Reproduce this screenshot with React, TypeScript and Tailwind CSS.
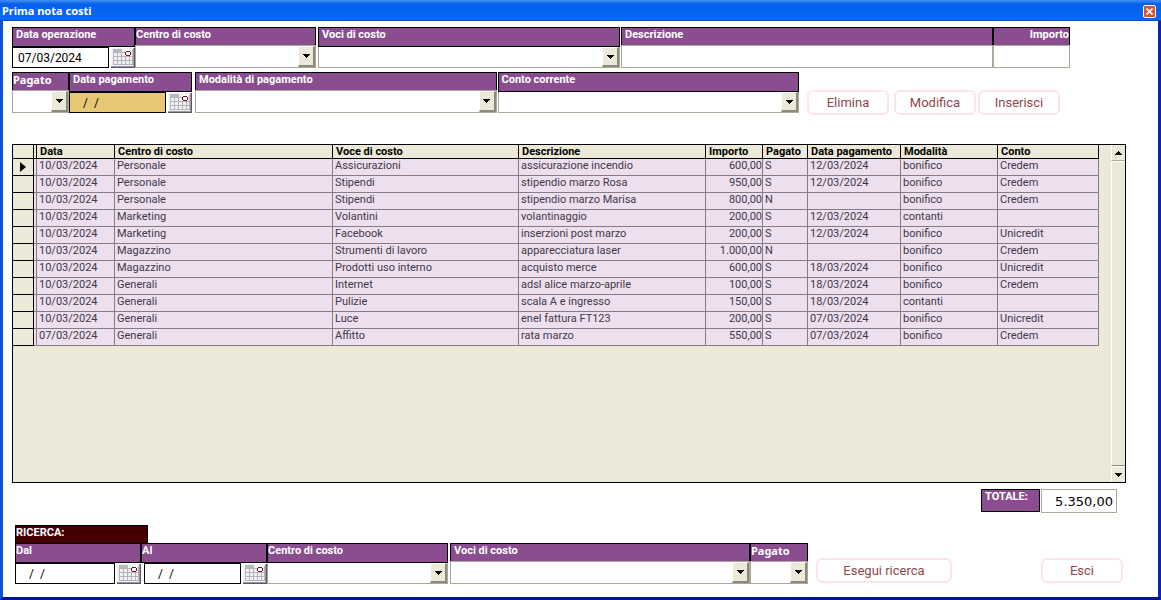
import { useId } from "react";
import type { ReactNode } from "react";

const cx = (...parts: (string | false | undefined)[]) => parts.filter(Boolean).join(" ");

type FieldProps = {
  label: string;
  id: string;
  ruled?: boolean;
  inset?: boolean;
  right?: boolean;
  wide?: boolean;
  children: ReactNode;
};

function Field({ label, id, ruled, inset, right, wide, children }: FieldProps) {
  return (
    <div className="flex h-[41px] min-w-0 flex-col">
      <label
        htmlFor={id}
        className={cx(
          "block shrink-0 overflow-hidden whitespace-nowrap border-x border-t border-black bg-[#8a4d8f] text-[11px] leading-[14px] font-bold text-white",
          ruled ? "h-5 border-b" : "h-[18px]",
          inset && "pl-[3px]",
          right && "text-right",
          wide && "font-['Noto_Sans',sans-serif]"
        )}
      >
        {label}
      </label>
      <div className="flex min-h-0 flex-1">{children}</div>
    </div>
  );
}

function SelectField(props: { label: string; options: string[]; ruled?: boolean; inset?: boolean; wide?: boolean }) {
  const id = useId();
  return (
    <Field id={id} label={props.label} ruled={props.ruled} inset={props.inset} wide={props.wide}>
      <div
        className={cx(
          "relative flex min-w-0 flex-1 border-x border-b border-[#aca899] bg-white",
          !props.ruled && "border-t"
        )}
      >
        <select id={id} defaultValue="" className="w-full min-w-0 appearance-none bg-white px-1 text-xs outline-none">
          <option value=""></option>
          {props.options.map((o) => (
            <option key={o}>{o}</option>
          ))}
        </select>
        <span className="pointer-events-none absolute inset-y-0 right-0 flex w-[17px] items-center justify-center border-t border-l border-r-2 border-b-2 border-t-white border-l-white border-r-[#8d8a7c] border-b-[#8d8a7c] bg-[#ece9d8]">
          <svg width="7" height="4" viewBox="0 0 7 4" shapeRendering="crispEdges">
            <path d="M0 0h7v1H6v1H5v1H4v1H3V3H2V2H1V1H0z" fill="#000" />
          </svg>
        </span>
      </div>
    </Field>
  );
}

function TextField({ label, inset, right }: { label: string; inset?: boolean; right?: boolean }) {
  const id = useId();
  return (
    <Field id={id} label={label} inset={inset} right={right}>
      <input
        id={id}
        type="text"
        className={cx("w-full min-w-0 border border-[#aca899] bg-white px-1 text-xs outline-none", right && "text-right")}
      />
    </Field>
  );
}

function CalendarButton({ label }: { label: string }) {
  return (
    <button type="button" aria-label={label} className="ml-px h-full w-[25px] shrink-0 bg-white">
      <svg width="25" height="21" viewBox="0 0 25 21" shapeRendering="crispEdges">
        <path d="M1 1h24v20H1z" fill="#f1f0f3" />
        <path d="M3 2h9v3H3z" fill="#b9b9c0" />
        <path
          d="M3 5.5h12M3 9.5h19M3 13.5h19M3 17.5h19M3.5 5v13M7.5 5v13M11.5 5v13M15.5 9v9M19.5 9v9M22.5 3v15"
          stroke="#b4b4bc"
          fill="none"
        />
        <path d="M1 19h23v1H1zM23 1h1v19h-1z" fill="#9a9aa3" />
        <path d="M1 20h24v1H1zM24 1h1v20h-1z" fill="#585862" />
        <path d="M15 3h6v6h-6z" fill="#fff" />
        <path d="M16 4h4v1h1v3h-1v1h-4V8h-1V5h1zM16 5v3h4V5z" fill="#7c0c1e" fillRule="evenodd" />
      </svg>
    </button>
  );
}

function DateField(props: { label: string; value: string; inset?: boolean; highlight?: boolean; spaced?: boolean }) {
  const id = useId();
  return (
    <Field id={id} label={props.label} ruled inset={props.inset}>
      <input
        id={id}
        type="text"
        defaultValue={props.value}
        className={cx(
          "min-w-0 flex-1 border border-black text-xs text-black outline-none",
          props.highlight ? "bg-[#e8c774]" : "bg-white",
          props.value.startsWith("/") ? "pl-[13px]" : "pl-[5px]",
          props.spaced && "ml-[3px]"
        )}
      />
      <CalendarButton label={`Calendario ${props.label}`} />
    </Field>
  );
}

function ActionButton({ children, className }: { children: string; className: string }) {
  return (
    <button
      type="button"
      className={cx(
        "h-[25px] shrink-0 rounded-md border-2 border-[#fde4e6] bg-white text-[13px] leading-5 whitespace-nowrap text-[#8f474e]",
        className
      )}
    >
      {children}
    </button>
  );
}

const columns = [
  { name: "Data", width: "w-[78px]" },
  { name: "Centro di costo", width: "w-[218px]" },
  { name: "Voce di costo", width: "w-[186px]" },
  { name: "Descrizione", width: "w-[187px]" },
  { name: "Importo", width: "w-[57px]" },
  { name: "Pagato", width: "w-[45px]" },
  { name: "Data pagamento", width: "w-[93px]" },
  { name: "Modalità", width: "w-[97px]" },
  { name: "Conto", width: "w-[101px]" },
];

const rows = [
  ["10/03/2024", "Personale", "Assicurazioni", "assicurazione incendio", "600,00", "S", "12/03/2024", "bonifico", "Credem"],
  ["10/03/2024", "Personale", "Stipendi", "stipendio marzo Rosa", "950,00", "S", "12/03/2024", "bonifico", "Credem"],
  ["10/03/2024", "Personale", "Stipendi", "stipendio marzo Marisa", "800,00", "N", "", "bonifico", "Credem"],
  ["10/03/2024", "Marketing", "Volantini", "volantinaggio", "200,00", "S", "12/03/2024", "contanti", ""],
  ["10/03/2024", "Marketing", "Facebook", "inserzioni post marzo", "200,00", "S", "12/03/2024", "bonifico", "Unicredit"],
  ["10/03/2024", "Magazzino", "Strumenti di lavoro", "apparecciatura laser", "1.000,00", "N", "", "bonifico", "Credem"],
  ["10/03/2024", "Magazzino", "Prodotti uso interno", "acquisto merce", "600,00", "S", "18/03/2024", "bonifico", "Unicredit"],
  ["10/03/2024", "Generali", "Internet", "adsl alice marzo-aprile", "100,00", "S", "18/03/2024", "bonifico", "Credem"],
  ["10/03/2024", "Generali", "Pulizie", "scala A e ingresso", "150,00", "S", "18/03/2024", "contanti", ""],
  ["10/03/2024", "Generali", "Luce", "enel fattura FT123", "200,00", "S", "07/03/2024", "bonifico", "Unicredit"],
  ["07/03/2024", "Generali", "Affitto", "rata marzo", "550,00", "S", "07/03/2024", "bonifico", "Credem"],
];

const centri = ["Personale", "Marketing", "Magazzino", "Generali"];
const voci = [...new Set(rows.map((r) => r[2]))];

function CostTable() {
  return (
    <table className="w-full table-fixed border-separate border-spacing-0 text-[11px] text-[#40384a]">
      <colgroup>
        <col className="w-[21px]" />
        <col className="w-[3px]" />
        {columns.map((c) => (
          <col key={c.name} className={c.width} />
        ))}
      </colgroup>
      <thead>
        <tr className="h-[14px]">
          <th className="border-r border-b border-black p-0"></th>
          <th className="border-r border-b border-black p-0"></th>
          {columns.map((c) => (
            <th
              key={c.name}
              scope="col"
              className="overflow-hidden border-r border-b border-black p-0 pl-[3px] text-left leading-[13px] font-bold whitespace-nowrap text-black"
            >
              {c.name}
            </th>
          ))}
        </tr>
      </thead>
      <tbody>
        {rows.map((row, r) => (
          <tr key={r} className="h-[17px]">
            <td className="border-r border-b border-black p-0 align-middle">
              {r === 0 && (
                <svg width="6" height="10" viewBox="0 0 6 10" className="ml-[7px] block">
                  <path d="M0 0l6 5-6 5z" fill="#000" />
                </svg>
              )}
            </td>
            <td className="border-r border-b border-[#857c88] bg-[#eedfee] p-0"></td>
            {row.map((cell, c) => (
              <td
                key={c}
                className={cx(
                  "overflow-hidden border-r border-b border-[#857c88] bg-[#eedfee] p-0 align-top leading-[13px] whitespace-nowrap",
                  c === 4 ? "text-right" : "pl-[2px]"
                )}
              >
                {cell}
              </td>
            ))}
          </tr>
        ))}
      </tbody>
    </table>
  );
}

function ScrollButton({ up }: { up?: boolean }) {
  return (
    <button
      type="button"
      aria-label={up ? "Scorri su" : "Scorri giù"}
      className={cx(
        "flex h-4 items-center justify-center border-l border-l-white bg-[#ece9d8]",
        up ? "border-b border-b-[#aca899]" : "border-t border-t-white"
      )}
    >
      <svg width="7" height="4" viewBox="0 0 7 4" shapeRendering="crispEdges">
        {up ? (
          <path d="M3 0h1v1h1v1h1v1h1v1H0V3h1V2h1V1h1z" fill="#000" />
        ) : (
          <path d="M0 0h7v1H6v1H5v1H4v1H3V3H2V2H1V1H0z" fill="#000" />
        )}
      </svg>
    </button>
  );
}

export default function App() {
  const totalId = useId();
  return (
    <div className="flex min-h-screen flex-col bg-white font-[Roboto,sans-serif] text-black">
      <header className="flex h-[21px] items-center justify-between border-b border-[#0b4bc4] bg-linear-to-b from-[#3f8ff5] via-[#0560ea] via-20% to-[#0569fb] pt-[2px] pr-[5px] pl-[2px]">
        <h1 className="font-['Noto_Sans',sans-serif] text-[11px] leading-4 font-bold text-white">Prima nota costi</h1>
        <button
          type="button"
          aria-label="Chiudi"
          className="flex size-[13px] items-center justify-center rounded-xs border border-white bg-[#d9532c]"
        >
          <svg width="7" height="7" viewBox="0 0 7 7">
            <path d="M0.5 0.5l6 6M6.5 0.5l-6 6" stroke="#fff" strokeWidth="1.7" />
          </svg>
        </button>
      </header>

      <main className="flex flex-1 flex-col border-x-[3px] border-b-[3px] border-r-[#0a22b8] border-b-[#00168f] border-l-[#0f4fdf] pt-[6px] pr-8 pb-[13px] pl-[9px]">
        <form className="flex flex-col gap-1" onSubmit={(e) => e.preventDefault()}>
          <div className="mr-14 grid grid-cols-[123px_181fr_2px_302fr_1px_372fr_77px]">
            <DateField label="Data operazione" value="07/03/2024" inset />
            <SelectField label="Centro di costo" options={centri} />
            <span />
            <SelectField label="Voci di costo" options={voci} ruled inset />
            <span />
            <TextField label="Descrizione" inset />
            <TextField label="Importo" right />
          </div>
          <div className="mr-[66px] flex items-start">
            <div className="grid min-w-0 flex-1 grid-cols-[57px_123px_3px_302fr_1px_302fr]">
              <SelectField label="Pagato" options={["S", "N"]} wide />
              <DateField label="Data pagamento" value="/  /" inset highlight />
              <span />
              <SelectField label="Modalità di pagamento" options={["bonifico", "contanti"]} inset />
              <span />
              <SelectField label="Conto corrente" options={["Credem", "Unicredit"]} ruled inset />
            </div>
            <div className="mt-[18px] ml-2 flex">
              <ActionButton className="mr-[5px] w-[82px]">Elimina</ActionButton>
              <ActionButton className="mr-[2px] w-[82px]">Modifica</ActionButton>
              <ActionButton className="w-[82px]">Inserisci</ActionButton>
            </div>
          </div>
        </form>

        <section className="mt-[29px] flex flex-1 border border-black bg-[#ece9d8]">
          <div className="min-w-0 flex-1 pr-3">
            <CostTable />
          </div>
          <div className="flex w-[14px] shrink-0 flex-col">
            <ScrollButton up />
            <div className="flex-1 border-t border-b border-l border-t-white border-b-[#8d8a7c] border-l-white bg-[#ece9d8]" />
            <ScrollButton />
          </div>
        </section>

        <div className="mt-[6px] mr-[9px] flex justify-end gap-px">
          <label
            htmlFor={totalId}
            className="h-[23px] w-[59px] border border-black bg-[#8a4d8f] pl-[3px] text-[11px] leading-[14px] font-bold text-white"
          >
            TOTALE:
          </label>
          <input
            id={totalId}
            type="text"
            readOnly
            defaultValue="5.350,00"
            className="h-6 w-[76px] border border-[#aca899] bg-white pr-[3px] text-right font-['DejaVu_Sans',sans-serif] text-[13px] outline-none"
          />
        </div>

        <form className="mt-3 ml-[3px]" onSubmit={(e) => e.preventDefault()}>
          <h2 className="h-[18px] w-[133px] border-x border-t border-black bg-[#430003] text-[11px] leading-[14px] font-bold text-white">
            RICERCA:
          </h2>
          <div className="mr-[3px] flex items-start">
            <div className="grid min-w-0 flex-1 grid-cols-[126px_126px_181fr_2px_300fr_58px]">
              <DateField label="Dal" value="/  /" />
              <DateField label="Al" value="/  /" spaced />
              <SelectField label="Centro di costo" options={centri} ruled />
              <span />
              <SelectField label="Voci di costo" options={voci} inset />
              <SelectField label="Pagato" options={["S", "N"]} wide />
            </div>
            <ActionButton className="mt-[15px] ml-2 w-[136px]">Esegui ricerca</ActionButton>
            <ActionButton className="mt-[15px] ml-[89px] w-[82px]">Esci</ActionButton>
          </div>
        </form>
      </main>
    </div>
  );
}
